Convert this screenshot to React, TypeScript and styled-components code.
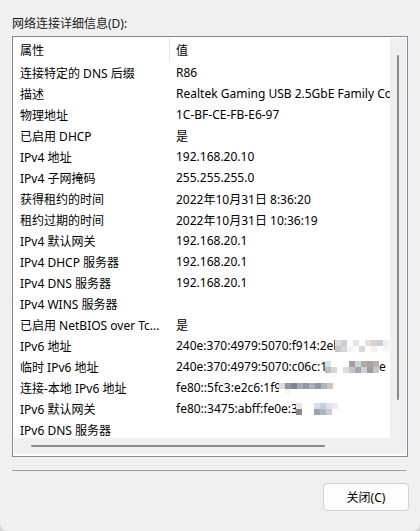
import React from "react";
import styled, { createGlobalStyle } from "styled-components";

const Global = createGlobalStyle`
  html, body { margin: 0; padding: 0; background: #d6d6d6; }
  body { width: 420px; height: 531px; overflow: hidden; }
  * { box-sizing: border-box; }
`;

const FONT = `"Noto Sans", "Noto Sans CJK SC", sans-serif`;

const Window = styled.div`
  width: 420px;
  height: 531px;
  background: #f0f0f0;
  border-radius: 0 0 8px 8px;
  padding: 15px 12px 0 12px;
  font-family: ${FONT};
  font-size: 12px;
  color: #000;
  display: flex;
  flex-direction: column;
`;

const Label = styled.div`
  height: 17px;
  line-height: 17px;
  margin-bottom: 4px;
  color: #1a1a1a;
`;

const Frame = styled.div`
  width: 396px;
  height: 421px;
  border: 1px solid #828790;
  padding: 1px;
  background: #fff;
  display: grid;
  grid-template-columns: 376px 16px;
  grid-template-rows: 400px 16px;
`;

const ListArea = styled.div`
  overflow: hidden;
  background: #fff;
`;

const Row = styled.div<{ $header?: boolean }>`
  display: grid;
  grid-template-columns: 156px 1fr;
  height: ${(p) => (p.$header ? 24 : 21)}px;
  align-items: center;
  white-space: nowrap;
`;

const Cell = styled.div<{ $divider?: boolean }>`
  padding-left: 6px;
  height: 100%;
  display: flex;
  align-items: center;
  overflow: hidden;
  border-right: ${(p) => (p.$divider ? "1px solid #e5e5e5" : "none")};
`;

const VScroll = styled.div`
  background: #f0f0f0;
  display: flex;
  justify-content: center;
  padding-top: 17px;
`;

const VThumb = styled.div`
  width: 2px;
  height: 345px;
  background: #8a8a8a;
  border-radius: 1px;
`;

const HScroll = styled.div`
  background: #f0f0f0;
  display: flex;
  align-items: center;
  padding-left: 17px;
`;

const HThumb = styled.div`
  height: 2px;
  width: 294px;
  background: #8a8a8a;
  border-radius: 1px;
`;

const Corner = styled.div`
  background: #f0f0f0;
`;

const Separator = styled.div`
  margin-top: 13px;
  width: 394px;
  height: 1px;
  background: #a0a0a0;
`;

const ButtonRow = styled.div`
  display: flex;
  justify-content: flex-end;
  margin-top: 12px;
  margin-right: -1px;
`;

const Button = styled.button`
  width: 86px;
  height: 28px;
  border: 1px solid #d0d0d0;
  border-radius: 4px;
  background: #fdfdfd;
  font-family: ${FONT};
  font-size: 12px;
  color: #000;
  padding: 0;
`;

const MosaicSvg = styled.svg`
  flex: none;
  display: block;
`;

type Block = [number, number, string];

const Mosaic: React.FC<{ blocks: Block[]; width: number; offset?: number }> = ({
  blocks,
  width,
  offset = 0,
}) => (
  <MosaicSvg width={width} height={14} style={{ marginLeft: offset }}>
    {blocks.map(([x, y, c], i) => (
      <rect key={i} x={x} y={y} width={6} height={6} fill={c} />
    ))}
  </MosaicSvg>
);

const m1: Block[] = [
  [0, 1, "#d7dbe2"], [6, 1, "#c9ced6"], [12, 1, "#ffffff"], [18, 1, "#e3e3e6"], [24, 1, "#ffffff"], [30, 1, "#eadedb"], [36, 1, "#dccfce"], [42, 1, "#c9d0dc"], [48, 1, "#eef0f3"],
  [0, 7, "#c3c8cf"], [6, 7, "#d4d7dc"], [12, 7, "#f3f3f3"], [18, 7, "#ffffff"], [24, 7, "#dcd5d3"], [30, 7, "#ffffff"], [36, 7, "#f7f0ee"], [42, 7, "#ffffff"], [48, 7, "#f5f5f7"],
];
const m2: Block[] = [
  [0, 1, "#cfe4ec"], [6, 1, "#ffffff"], [12, 1, "#ffffff"], [18, 1, "#ffffff"], [24, 1, "#a99aa6"], [30, 1, "#bcd8dc"], [36, 1, "#b3a9a4"], [42, 1, "#aaa3a1"], [48, 1, "#b7b0b0"],
  [0, 7, "#b9bcc2"], [6, 7, "#d9d4d3"], [12, 7, "#ffffff"], [18, 7, "#e1dad7"], [24, 7, "#c8c3c9"], [30, 7, "#a4a7b1"], [36, 7, "#cfd2d6"], [42, 7, "#9d9a9e"], [48, 7, "#c8c6c8"],
];
const m3: Block[] = [
  [0, 2, "#d8dcde"], [6, 2, "#8e97a2"], [12, 2, "#7c8591"], [18, 2, "#a2aab4"], [24, 2, "#8f99a6"], [30, 2, "#a9b1bc"], [36, 2, "#8e97a3"], [42, 2, "#b0b6bf"], [48, 2, "#d6c2b4"],
  [0, 8, "#ffffff"], [6, 8, "#fbf2ea"], [12, 8, "#ffffff"], [18, 8, "#ffffff"], [24, 8, "#ffffff"], [30, 8, "#ffffff"], [36, 8, "#ffffff"], [42, 8, "#ffffff"], [48, 8, "#ffffff"],
];
const m4: Block[] = [
  [0, 1, "#e8e6e8"], [6, 1, "#ffffff"], [12, 1, "#ffffff"], [18, 1, "#d5dff0"], [24, 1, "#c2cfe2"], [30, 1, "#dde3ee"], [36, 1, "#e9edf3"],
  [0, 7, "#8b8690"], [6, 7, "#ffffff"], [12, 7, "#ffffff"], [18, 7, "#9aa3b0"], [24, 7, "#adb5c1"], [30, 7, "#c8cdd5"], [36, 7, "#ffffff"],
];

type Item = { k: string; v: React.ReactNode };

const items: Item[] = [
  { k: "连接特定的 DNS 后缀", v: "R86" },
  { k: "描述", v: "Realtek Gaming USB 2.5GbE Family Controller" },
  { k: "物理地址", v: "1C-BF-CE-FB-E6-97" },
  { k: "已启用 DHCP", v: "是" },
  { k: "IPv4 地址", v: "192.168.20.10" },
  { k: "IPv4 子网掩码", v: "255.255.255.0" },
  { k: "获得租约的时间", v: "2022年10月31日 8:36:20" },
  { k: "租约过期的时间", v: "2022年10月31日 10:36:19" },
  { k: "IPv4 默认网关", v: "192.168.20.1" },
  { k: "IPv4 DHCP 服务器", v: "192.168.20.1" },
  { k: "IPv4 DNS 服务器", v: "192.168.20.1" },
  { k: "IPv4 WINS 服务器", v: "" },
  { k: "已启用 NetBIOS over Tc...", v: "是" },
  {
    k: "IPv6 地址",
    v: (
      <>
        <span>240e:370:4979:5070:f914:2eb</span>
        <Mosaic blocks={m1} width={54} offset={-6} />
      </>
    ),
  },
  {
    k: "临时 IPv6 地址",
    v: (
      <>
        <span>240e:370:4979:5070:c06c:1</span>
        <Mosaic blocks={m2} width={54} offset={-2} />
        <span>e</span>
      </>
    ),
  },
  {
    k: "连接-本地 IPv6 地址",
    v: (
      <>
        <span>fe80::5fc3:e2c6:1f9</span>
        <Mosaic blocks={m3} width={54} offset={-2} />
      </>
    ),
  },
  {
    k: "IPv6 默认网关",
    v: (
      <>
        <span>fe80::3475:abff:fe0e:3</span>
        <Mosaic blocks={m4} width={42} offset={-2} />
      </>
    ),
  },
  { k: "IPv6 DNS 服务器", v: "" },
];

export default function App() {
  return (
    <>
      <Global />
      <Window>
        <Label>网络连接详细信息(D):</Label>
        <Frame>
          <ListArea>
            <Row $header>
              <Cell $divider>属性</Cell>
              <Cell>值</Cell>
            </Row>
            {items.map((it, i) => (
              <Row key={i}>
                <Cell>{it.k}</Cell>
                <Cell>{it.v}</Cell>
              </Row>
            ))}
          </ListArea>
          <VScroll>
            <VThumb />
          </VScroll>
          <HScroll>
            <HThumb />
          </HScroll>
          <Corner />
        </Frame>
        <Separator />
        <ButtonRow>
          <Button>关闭(C)</Button>
        </ButtonRow>
      </Window>
    </>
  );
}
